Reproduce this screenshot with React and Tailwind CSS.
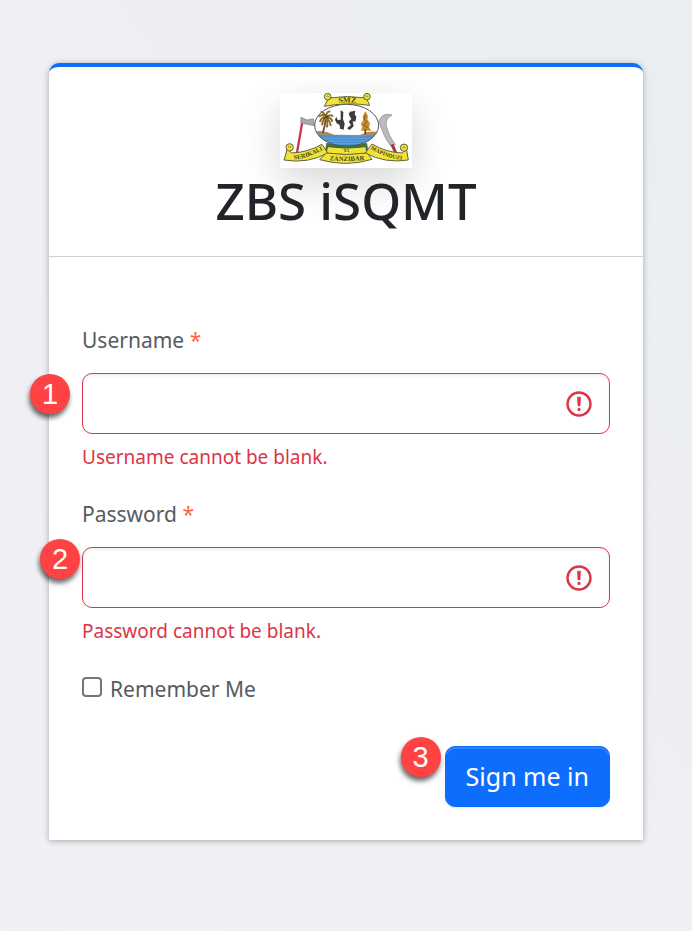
import React, { useState } from 'react';

function Emblem() {
  return (
    <svg
      viewBox="30 27 396 225"
      role="img"
      aria-label="SMZ Serikali ya Mapinduzi Zanzibar"
      className="block h-[75px] w-[132px] bg-white shadow-[0_14px_40px_rgba(0,0,0,0.16)]"
    >
      <defs>
        <clipPath id="oval">
          <ellipse cx="230" cy="124" rx="96" ry="63" />
        </clipPath>
        <path id="topText" d="M188 61 Q232 50 276 61" />
        <path id="leftText" d="M66 228 Q115 224 164 194" />
        <path id="midText" d="M170 228 Q230 235 292 227" />
        <path id="rightText" d="M300 194 Q345 222 398 228" />
      </defs>

      {/* axe */}
      <path d="M98 108 L81 206" stroke="#c23a4a" strokeWidth="7" />
      <path d="M93 100 L112 108 L130 104 L134 125 L112 121 L92 117 Z" fill="#a7aaad" stroke="#7b7d81" strokeWidth="2" />
      {/* sickle */}
      <path
        d="M327 110 Q338 84 366 93 Q343 104 350 130 Q356 155 376 182 L364 188 Q340 160 327 110 Z"
        fill="#b9bcbf"
        stroke="#85878b"
        strokeWidth="2"
      />
      <path d="M366 181 L377 206" stroke="#a83240" strokeWidth="9" />

      {/* shield */}
      <ellipse cx="230" cy="124" rx="96" ry="63" fill="#fff" />
      <g clipPath="url(#oval)">
        <path d="M130 144 Q160 136 192 152 L270 153 Q300 137 330 146 V158 H130 Z" fill="#b08a58" />
        <path d="M130 153 Q180 150 230 155 T330 152 V190 H130 Z" fill="#4a93d2" />
        <path d="M140 163 H320 M150 171 H310 M160 179 H300" stroke="#69aadd" strokeWidth="2" />
      </g>
      <ellipse cx="230" cy="124" rx="96" ry="63" fill="none" stroke="#55525c" strokeWidth="3" />

      {/* palm and clove tree */}
      <path d="M168 98 Q166 125 158 148" fill="none" stroke="#6d4a25" strokeWidth="5" />
      <path
        d="M168 100 Q156 86 147 99 M168 100 Q154 98 150 114 M168 100 Q158 108 156 124 M168 100 Q162 84 152 84 M168 98 Q170 82 181 82 M168 100 Q182 88 189 98 M168 100 Q184 100 187 113 M168 102 Q181 110 182 126 M168 102 Q174 114 171 130"
        fill="none"
        stroke="#8f6f2c"
        strokeWidth="6"
      />
      <path d="M165 92 L174 104 M160 104 L176 96" stroke="#4f4119" strokeWidth="3" />
      <path d="M286 81 L294 97 L292 106 L300 118 L297 130 L304 140 H273 L277 128 L272 121 L280 108 L278 98 Z" fill="#c88a2c" />
      <path d="M286 92 L283 106 L291 114 L281 124 L294 132" fill="none" stroke="#80591f" strokeWidth="3" />
      <path d="M286 136 V151" stroke="#5e3f20" strokeWidth="5" />

      {/* islands */}
      <path d="M199 98 L203 108 L212 107 L212 79 L220 84 L219 105 L224 119 L221 137 L210 134 L209 123 L200 118 L195 107 Z" fill="#3d3b40" />
      <path d="M240 83 L256 80 L254 91 L259 98 L256 113 L248 112 L251 127 L239 138 L231 133 L243 123 L236 113 L244 105 L236 91 Z" fill="#3d3b40" />

      {/* base */}
      <path d="M170 178 Q230 194 290 178 L294 204 Q230 217 166 204 Z" fill="#3f7d42" stroke="#49482e" strokeWidth="2" />
      <path d="M173 188 Q230 197 287 188 L291 207 Q230 222 169 207 Z" fill="#efe339" stroke="#49482e" strokeWidth="2" />

      {/* ribbons */}
      <g fill="#f0e43b" stroke="#66613a" strokeWidth="3">
        <path d="M176 42 Q232 33 289 42 L299 64 Q232 54 163 67 Z" />
        <circle cx="173" cy="38" r="10" />
        <circle cx="291" cy="38" r="10" />
        <path d="M52 194 L65 207 Q110 206 156 181 L173 207 Q115 240 42 228 Z" />
        <path d="M409 194 L397 207 Q350 206 306 180 L286 207 Q345 239 415 228 Z" />
        <path d="M169 207 Q230 216 291 207 L306 226 Q230 250 149 227 Z" />
        <circle cx="59" cy="190" r="11" />
        <circle cx="402" cy="191" r="11" />
      </g>
      <path d="M54 190 q6 -7 9 2 M398 191 q6 -7 8 2 M169 38 q5 -6 8 2 M287 38 q5 -6 8 2" fill="none" stroke="#5a552b" strokeWidth="2" />

      <g className="font-['Liberation_Serif',serif] font-bold" fill="#4a4420" textAnchor="middle">
        <text fontSize="24"><textPath href="#topText" startOffset="50%">SMZ</textPath></text>
        <text fontSize="19"><textPath href="#leftText" startOffset="50%">SERIKALI</textPath></text>
        <text x="229" y="205" fontSize="13">YA</text>
        <text fontSize="20"><textPath href="#midText" startOffset="50%">ZANZIBAR</textPath></text>
        <text fontSize="17"><textPath href="#rightText" startOffset="50%">MAPINDUZI</textPath></text>
      </g>
    </svg>
  );
}

function AlertIcon() {
  return (
    <svg
      viewBox="0 0 26 26"
      aria-hidden="true"
      className="pointer-events-none absolute top-1/2 right-[18px] size-[26px] -translate-y-1/2"
    >
      <circle cx="13" cy="13" r="11.5" fill="none" stroke="#dc3545" strokeWidth="2.4" />
      <path d="M11.4 6.2 H14.6 L14 15 H12 Z" fill="#dc3545" stroke="#dc3545" strokeWidth="0.6" strokeLinejoin="round" />
      <circle cx="13" cy="18.4" r="1.6" fill="#dc3545" />
    </svg>
  );
}

function StepBadge({ number, className }) {
  return (
    <span
      className={`absolute flex size-10 items-center justify-center rounded-full bg-[#ff4244] font-['Liberation_Sans',sans-serif] text-[29px] leading-none text-white shadow-[-1px_4px_5px_rgba(0,0,0,0.6)] ${className}`}
    >
      {number}
    </span>
  );
}

function Field({ id, label, type, value, onChange, step, badgeClass }) {
  return (
    <div className="mb-[25px]">
      <label htmlFor={id} className="block text-[21px] leading-8 text-[#555b61]">
        {label} <span className="text-[#ff6347]">*</span>
      </label>
      <div className="relative mt-[17px]">
        <input
          id={id}
          type={type}
          value={value}
          onChange={(e) => onChange(e.target.value)}
          aria-invalid="true"
          aria-describedby={`${id}-error`}
          className="block h-[61px] w-full rounded-[10px] border border-[#dc3545] bg-white pr-14 pl-4 text-[21px] shadow-[inset_0_2px_3px_rgba(0,0,0,0.06)] outline-none"
        />
        <AlertIcon />
        <StepBadge number={step} className={badgeClass} />
      </div>
      <p id={`${id}-error`} className="mt-[7px] text-[19px] leading-8 text-[#dc3545]">
        {label} cannot be blank.
      </p>
    </div>
  );
}

export default function App() {
  const [username, setUsername] = useState('');
  const [password, setPassword] = useState('');
  const [remember, setRemember] = useState(false);

  return (
    <div className="min-h-screen bg-linear-to-tr from-[#f2f0f4] via-[#efeff4] to-[#e9eef2] px-[49px] py-[63px] font-['Noto_Sans','Open_Sans',sans-serif]">
      <main className="rounded-t-[10px] border-t-4 border-[#0d6efd] bg-white shadow-[0_1px_6px_rgba(0,0,0,0.3)]">
        <header className="flex flex-col items-center border-b border-[#d0d0d0] pt-[26px] pb-6">
          <Emblem />
          <h1 className="text-[51px] leading-[64px] font-medium text-[#212529]">ZBS iSQMT</h1>
        </header>

        <form className="px-[33px] pt-[67px] pb-[33px]" onSubmit={(e) => e.preventDefault()}>
          <Field
            id="username"
            label="Username"
            type="text"
            value={username}
            onChange={setUsername}
            step={1}
            badgeClass="top-px -left-[52px]"
          />
          <Field
            id="password"
            label="Password"
            type="password"
            value={password}
            onChange={setPassword}
            step={2}
            badgeClass="-top-2 -left-[42px]"
          />

          <div className="flex items-center gap-2">
            <input
              id="remember"
              type="checkbox"
              checked={remember}
              onChange={(e) => setRemember(e.target.checked)}
              className="mb-1 size-5 appearance-none rounded-[4px] border-2 border-[#767676] bg-white checked:bg-[#0d6efd]"
            />
            <label htmlFor="remember" className="text-[21px] leading-[34px] text-[#555b61]">
              Remember Me
            </label>
          </div>

          <div className="mt-10 flex justify-end">
            <div className="relative">
              <StepBadge number={3} className="-top-[9px] -left-11" />
              <button
                type="submit"
                className="h-[61px] rounded-[10px] border border-[#0d6efd] bg-[#0d6efd] px-5 text-[25px] text-white shadow-[inset_0_2px_0_rgba(255,255,255,0.15),0_1px_2px_rgba(0,0,0,0.1)]"
              >
                Sign me in
              </button>
            </div>
          </div>
        </form>
      </main>
    </div>
  );
}
